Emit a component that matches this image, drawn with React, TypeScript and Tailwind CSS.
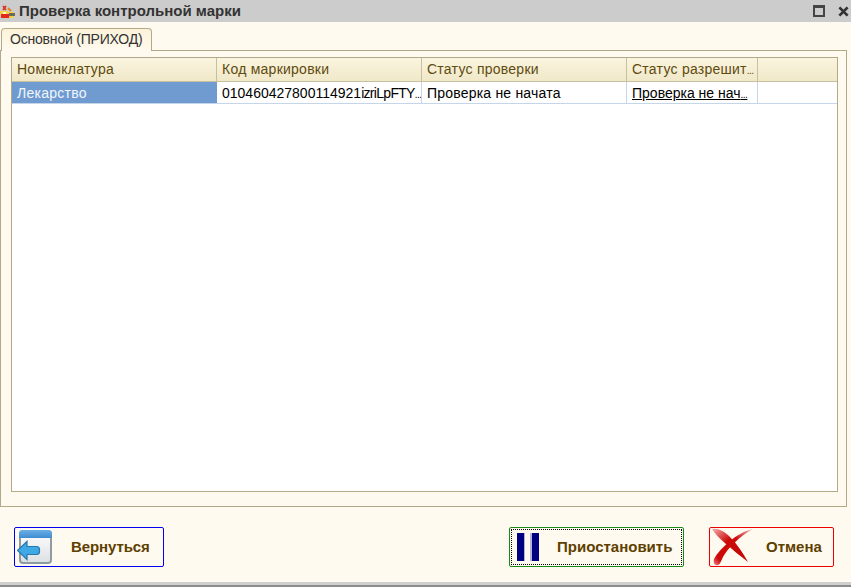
const columns = [
  { title: "Номенклатура", width: "w-[205px]" },
  { title: "Код маркировки", width: "w-[205px]" },
  { title: "Статус проверки", width: "w-[205px]" },
  { title: "Статус разрешит", width: "w-[131px]", cut: true },
];

function Dots() {
  return <span className="text-[10px] tracking-[-0.5px]">...</span>;
}

function TitleIcon() {
  return (
    <svg width="17" height="15" viewBox="0 0 17 15" className="shrink-0 mt-[1px]">
      <path d="M0 7h7l2 1h5v5l-3 1H1z" fill="#f6cf3a" />
      <path d="M1 10h8v4H1z" fill="#e8261c" />
      <path d="M9 9h6v3H9z" fill="#6a6a62" />
      <path d="M3 2l3 4M6 2L3 6" stroke="#d8301a" strokeWidth="1.6" />
      <path d="M8 4l3 3" stroke="#e8801a" strokeWidth="2" />
      <path d="M3 8h3v2H3z" fill="#fff6c8" />
    </svg>
  );
}

function BackIcon() {
  return (
    <svg width="36" height="36" viewBox="0 0 36 36" className="shrink-0">
      <defs>
        <linearGradient id="win" x1="0" y1="0" x2="0" y2="1">
          <stop offset="0" stopColor="#ffffff" />
          <stop offset="1" stopColor="#dcdfe1" />
        </linearGradient>
        <linearGradient id="bar" x1="0" y1="0" x2="0" y2="1">
          <stop offset="0" stopColor="#6cb0e6" />
          <stop offset="1" stopColor="#3d8cd0" />
        </linearGradient>
      </defs>
      <rect x="3" y="2" width="31" height="32" rx="3" fill="url(#win)" stroke="#8f9ba3" strokeWidth="2" />
      <path d="M2 9V5a4 4 0 0 1 4-4h25a4 4 0 0 1 4 4v4z" fill="url(#bar)" />
      <path d="M0.5 21.500L10 12.500v5h9.500a3 3 0 0 1 3 3v2a3 3 0 0 1-3 3H10v5z" fill="#3fa9e6" stroke="#2878b0" strokeWidth="1.2" />
    </svg>
  );
}

function PauseIcon() {
  return (
    <div className="flex gap-[5px] shrink-0">
      <div className="w-[7px] h-[28px] bg-[#000080] border-r border-[#b4b4d8] box-content" />
      <div className="w-[7px] h-[28px] bg-[#000080] border-l-2 border-[#b4b4d8] box-content" />
    </div>
  );
}

function CancelIcon() {
  return (
    <svg width="44" height="39" viewBox="0 0 44 39" className="shrink-0">
      <defs>
        <linearGradient id="s1" x1="0" y1="0" x2="1" y2="1">
          <stop offset="0" stopColor="#f4b0b0" />
          <stop offset="0.4" stopColor="#cc0a0a" />
          <stop offset="1" stopColor="#c00808" />
        </linearGradient>
        <linearGradient id="s2" x1="1" y1="0" x2="0" y2="1">
          <stop offset="0" stopColor="#f0c0c0" />
          <stop offset="0.35" stopColor="#cc0a0a" />
          <stop offset="0.85" stopColor="#cc0a0a" />
          <stop offset="1" stopColor="#f08080" />
        </linearGradient>
      </defs>
      <path d="M2 1C8 0 14 3 20 9 27 16 33 25 38 34 30 28 22 21 16 16 10 11 5 6 2 1z" fill="url(#s1)" />
      <path d="M43 1C34 3 26 8 20 13 13 19 7 25 4 31 3 35 5 38 8 37 10 37 11 33 13 29 18 20 30 8 43 1z" fill="url(#s2)" />
    </svg>
  );
}

export default function App() {
  return (
    <div className="w-[851px] h-[587px] flex flex-col bg-[#fffaef] overflow-hidden font-['Liberation_Sans',Arial,sans-serif]">
      <div className="h-[22px] shrink-0 bg-[#cccccc] flex items-center pr-[2px]">
        <TitleIcon />
        <span className="ml-[2px] text-[15px] font-bold text-[#333333]">Проверка контрольной марки</span>
        <div className="ml-auto flex items-center gap-[13px]">
          <div className="w-[12px] h-[12px] border-2 border-t-[3px] border-[#444444]" />
          <svg width="11" height="11" viewBox="0 0 12 12">
            <path d="M1.500 1.500l9 9M10.500 1.500l-9 9" stroke="#333333" strokeWidth="3" />
          </svg>
        </div>
      </div>

      <div className="h-[6px] shrink-0" />
      <div className="h-[23px] shrink-0 flex pl-[1px]">
        <div className="w-[151px] h-[23px] relative z-10 bg-gradient-to-b from-[#fbf2d8] to-[#fffaef] border border-b-0 border-[#b3a988] rounded-t-[4px] pl-[8px] text-[14px] leading-[21px] text-[#333333] tracking-[-0.2px] whitespace-nowrap">
          Основной (ПРИХОД)
        </div>
      </div>

      <div className="mt-[-1px] h-[457px] w-[847px] shrink-0 border border-[#b3a988] pt-[6px] pl-[10px]">
        <div className="w-[827px] h-[435px] border border-[#b3a988] bg-white flex flex-col">
          <div className="h-[24px] shrink-0 flex bg-gradient-to-b from-[#fbf5e0] to-[#f0e8c8] border-b border-[#c6c09e]">
            {columns.map((col) => (
              <div
                key={col.title}
                className={`${col.width} shrink-0 border-r border-[#c6c09e] pl-[5px] text-[14px] leading-[23px] text-[#5e4b10] tracking-[0.25px] whitespace-nowrap overflow-hidden`}
              >
                {col.title}
                {col.cut && <Dots />}
              </div>
            ))}
          </div>
          <div className="h-[22px] shrink-0 flex border-b border-[#c5d6ea] text-[14px] leading-[22px] tracking-[0.2px] whitespace-nowrap">
            <div className="w-[205px] shrink-0 bg-[#6f9bd1] text-white/90 pl-[5px] tracking-[0.25px]">Лекарство</div>
            <div className="w-[205px] shrink-0 border-r border-[#c5d6ea] pl-[5px] text-black tracking-[0px] overflow-hidden">
              010460427800114921<span className="tracking-[-0.7px]">izriLpFTY</span>
              <Dots />
            </div>
            <div className="w-[205px] shrink-0 border-r border-[#c5d6ea] pl-[5px] text-black">Проверка не начата</div>
            <div className="w-[131px] shrink-0 border-r border-[#c5d6ea] pl-[5px] text-black underline tracking-[0px] overflow-hidden">
              Проверка не нач
              <Dots />
            </div>
          </div>
        </div>
      </div>

      <div className="mt-[20px] flex pl-[14px] shrink-0">
        <button className="w-[150px] h-[40px] flex items-center bg-[#fffaef] border border-[#0000ee] rounded-[2px] pl-[2px]">
          <BackIcon />
          <span className="ml-[18px] text-[15px] font-bold text-[#5e4000] tracking-[-0.1px]">Вернуться</span>
        </button>
        <button className="ml-[345px] w-[175px] h-[40px] flex items-center bg-[#fffaef] border border-[#178a17] rounded-[2px] pl-[7px] outline-1 outline-dotted outline-black -outline-offset-3">
          <PauseIcon />
          <span className="ml-[18px] text-[15px] font-bold text-[#5e4000]">Приостановить</span>
        </button>
        <button className="ml-[25px] w-[125px] h-[40px] flex items-center bg-[#fffaef] border border-[#ee0000] rounded-[2px]">
          <CancelIcon />
          <span className="ml-[12px] text-[15px] font-bold text-[#5e4000]">Отмена</span>
        </button>
      </div>

      <div className="mt-auto h-[5px] shrink-0 bg-[#d0d0d0] border-b-[2px] border-[#8c8c8c]" />
    </div>
  );
}
